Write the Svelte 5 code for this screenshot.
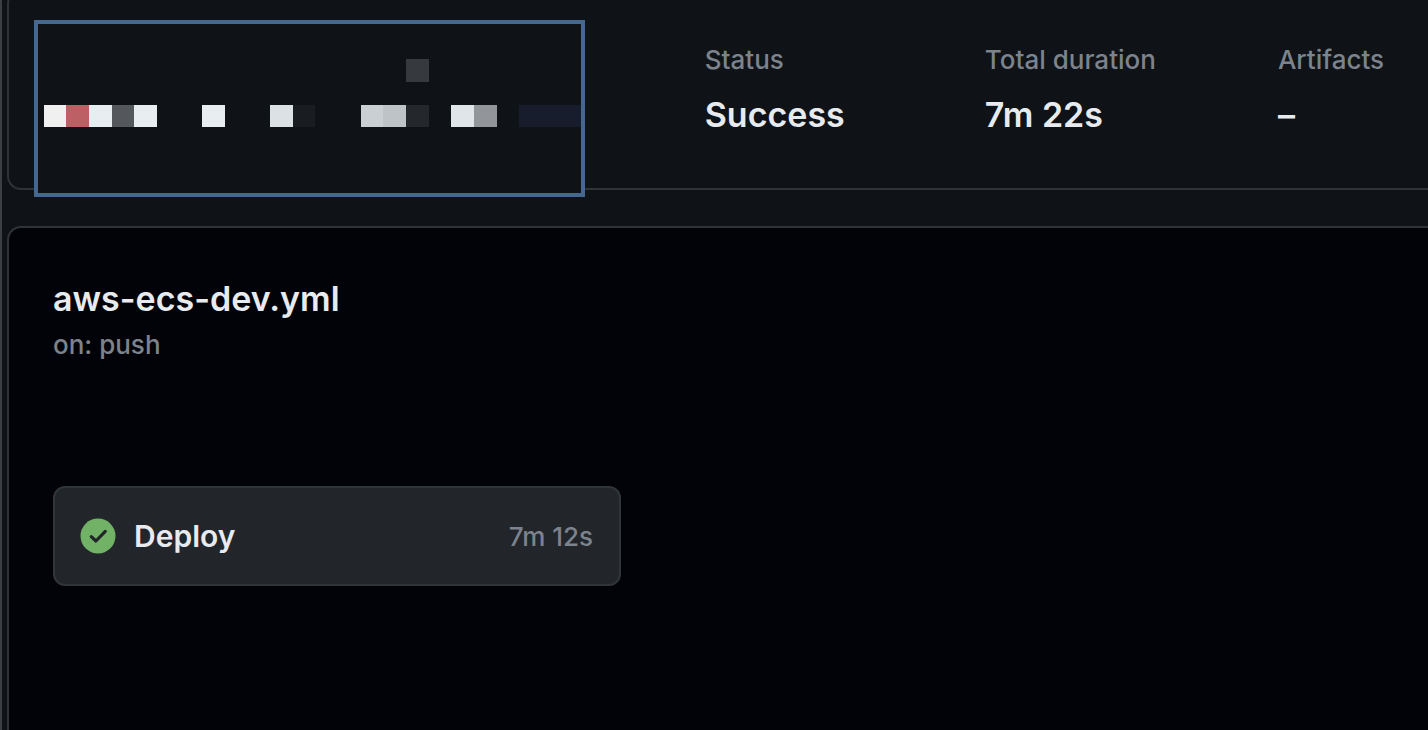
<script>
  const stats = [
    { label: 'Status', value: 'Success' },
    { label: 'Total duration', value: '7m 22s' },
    { label: 'Artifacts', value: '–' }
  ];

  const blocks = [
    { x: 406, y: 59, w: 23, h: 23, fill: '#363a3e' },
    { x: 44, y: 105, w: 22, h: 22, fill: '#f1f0f0' },
    { x: 66, y: 105, w: 23, h: 22, fill: '#bd6065' },
    { x: 89, y: 105, w: 23, h: 22, fill: '#e7edf1' },
    { x: 112, y: 105, w: 22, h: 22, fill: '#54575b' },
    { x: 134, y: 105, w: 23, h: 22, fill: '#e7edf1' },
    { x: 202, y: 105, w: 23, h: 22, fill: '#e7edf1' },
    { x: 270, y: 105, w: 23, h: 22, fill: '#dce1e5' },
    { x: 293, y: 105, w: 22, h: 22, fill: '#191c20' },
    { x: 361, y: 105, w: 22, h: 22, fill: '#cacfd3' },
    { x: 383, y: 105, w: 23, h: 22, fill: '#bec3c7' },
    { x: 406, y: 105, w: 23, h: 22, fill: '#24272b' },
    { x: 451, y: 105, w: 23, h: 22, fill: '#e0e5e9' },
    { x: 474, y: 105, w: 23, h: 22, fill: '#929599' },
    { x: 519, y: 105, w: 62, h: 22, fill: '#171d2c' }
  ];
</script>

<main class="page">
  <section class="card summary">
    <div class="masked">
      <svg viewBox="38 24 543 169" width="543" height="169" aria-hidden="true" shape-rendering="crispEdges">
        {#each blocks as b}
          <rect x={b.x} y={b.y} width={b.w} height={b.h} fill={b.fill} />
        {/each}
      </svg>
    </div>
    <dl class="stats">
      {#each stats as s}
        <div class="stat">
          <dt>{s.label}</dt>
          <dd>{s.value}</dd>
        </div>
      {/each}
    </dl>
  </section>

  <section class="card workflow">
    <h1>aws-ecs-dev.yml</h1>
    <p class="trigger">on: push</p>
    <a class="job" href="#deploy">
      <svg class="check" viewBox="0 0 36 36" width="36" height="36" aria-hidden="true">
        <circle cx="18" cy="18" r="17.5" fill="#71b267" />
        <path d="M11.3 18.6 L15.9 23 L25.3 13.4" fill="none" stroke="#22262a" stroke-width="3.2" stroke-linecap="round" stroke-linejoin="round" />
      </svg>
      <span class="name">Deploy</span>
      <span class="time">7m 12s</span>
    </a>
  </section>
</main>

<style>
  :global(body) {
    margin: 0;
    background: #0f1216;
  }

  .page {
    box-sizing: border-box;
    min-height: 100vh;
    display: flex;
    flex-direction: column;
    gap: 36px;
    padding-left: 5px;
    border-left: 2px solid #3c3f43;
    overflow: hidden;
    background: #0f1216;
    color: #e7ebf0;
    font-family: Inter, 'Liberation Sans', sans-serif;
  }

  .card {
    box-sizing: border-box;
    border: 2px solid #2f3236;
    border-right: 0;
    border-radius: 14px 0 0 14px;
  }

  .summary {
    position: relative;
    margin-top: -10px;
    padding: 51px 0 50px 44px;
  }

  .masked {
    position: absolute;
    top: 28px;
    left: 25px;
    border: 4px solid #456891;
    background: #0f1216;
  }

  .masked svg {
    display: block;
  }

  .stats {
    display: grid;
    grid-template-columns: 280fr 293fr 150fr;
    margin: 0 0 0 47.4%;
  }

  dt,
  .trigger,
  .time {
    color: #7d838c;
    font-size: 26px;
    font-weight: 450;
    line-height: 33px;
  }

  dd,
  h1 {
    margin: 0;
    font-size: 34px;
    font-weight: 600;
    line-height: 46px;
  }

  dd {
    margin-top: 16px;
  }

  .workflow {
    flex: 1;
    padding: 48px 44px;
    border-bottom: 0;
    border-bottom-left-radius: 0;
    background: #020308;
  }

  .trigger {
    margin: 6px 0 0;
  }

  .job {
    box-sizing: border-box;
    display: flex;
    align-items: center;
    gap: 18px;
    width: 100%;
    max-width: 568px;
    min-height: 100px;
    margin-top: 125px;
    padding: 0 26px 0 25px;
    border: 2px solid #303539;
    border-radius: 12px;
    background: #22262a;
    color: inherit;
    text-decoration: none;
  }

  .name {
    flex: 1;
    font-size: 30px;
    font-weight: 600;
    line-height: 40px;
  }
</style>
